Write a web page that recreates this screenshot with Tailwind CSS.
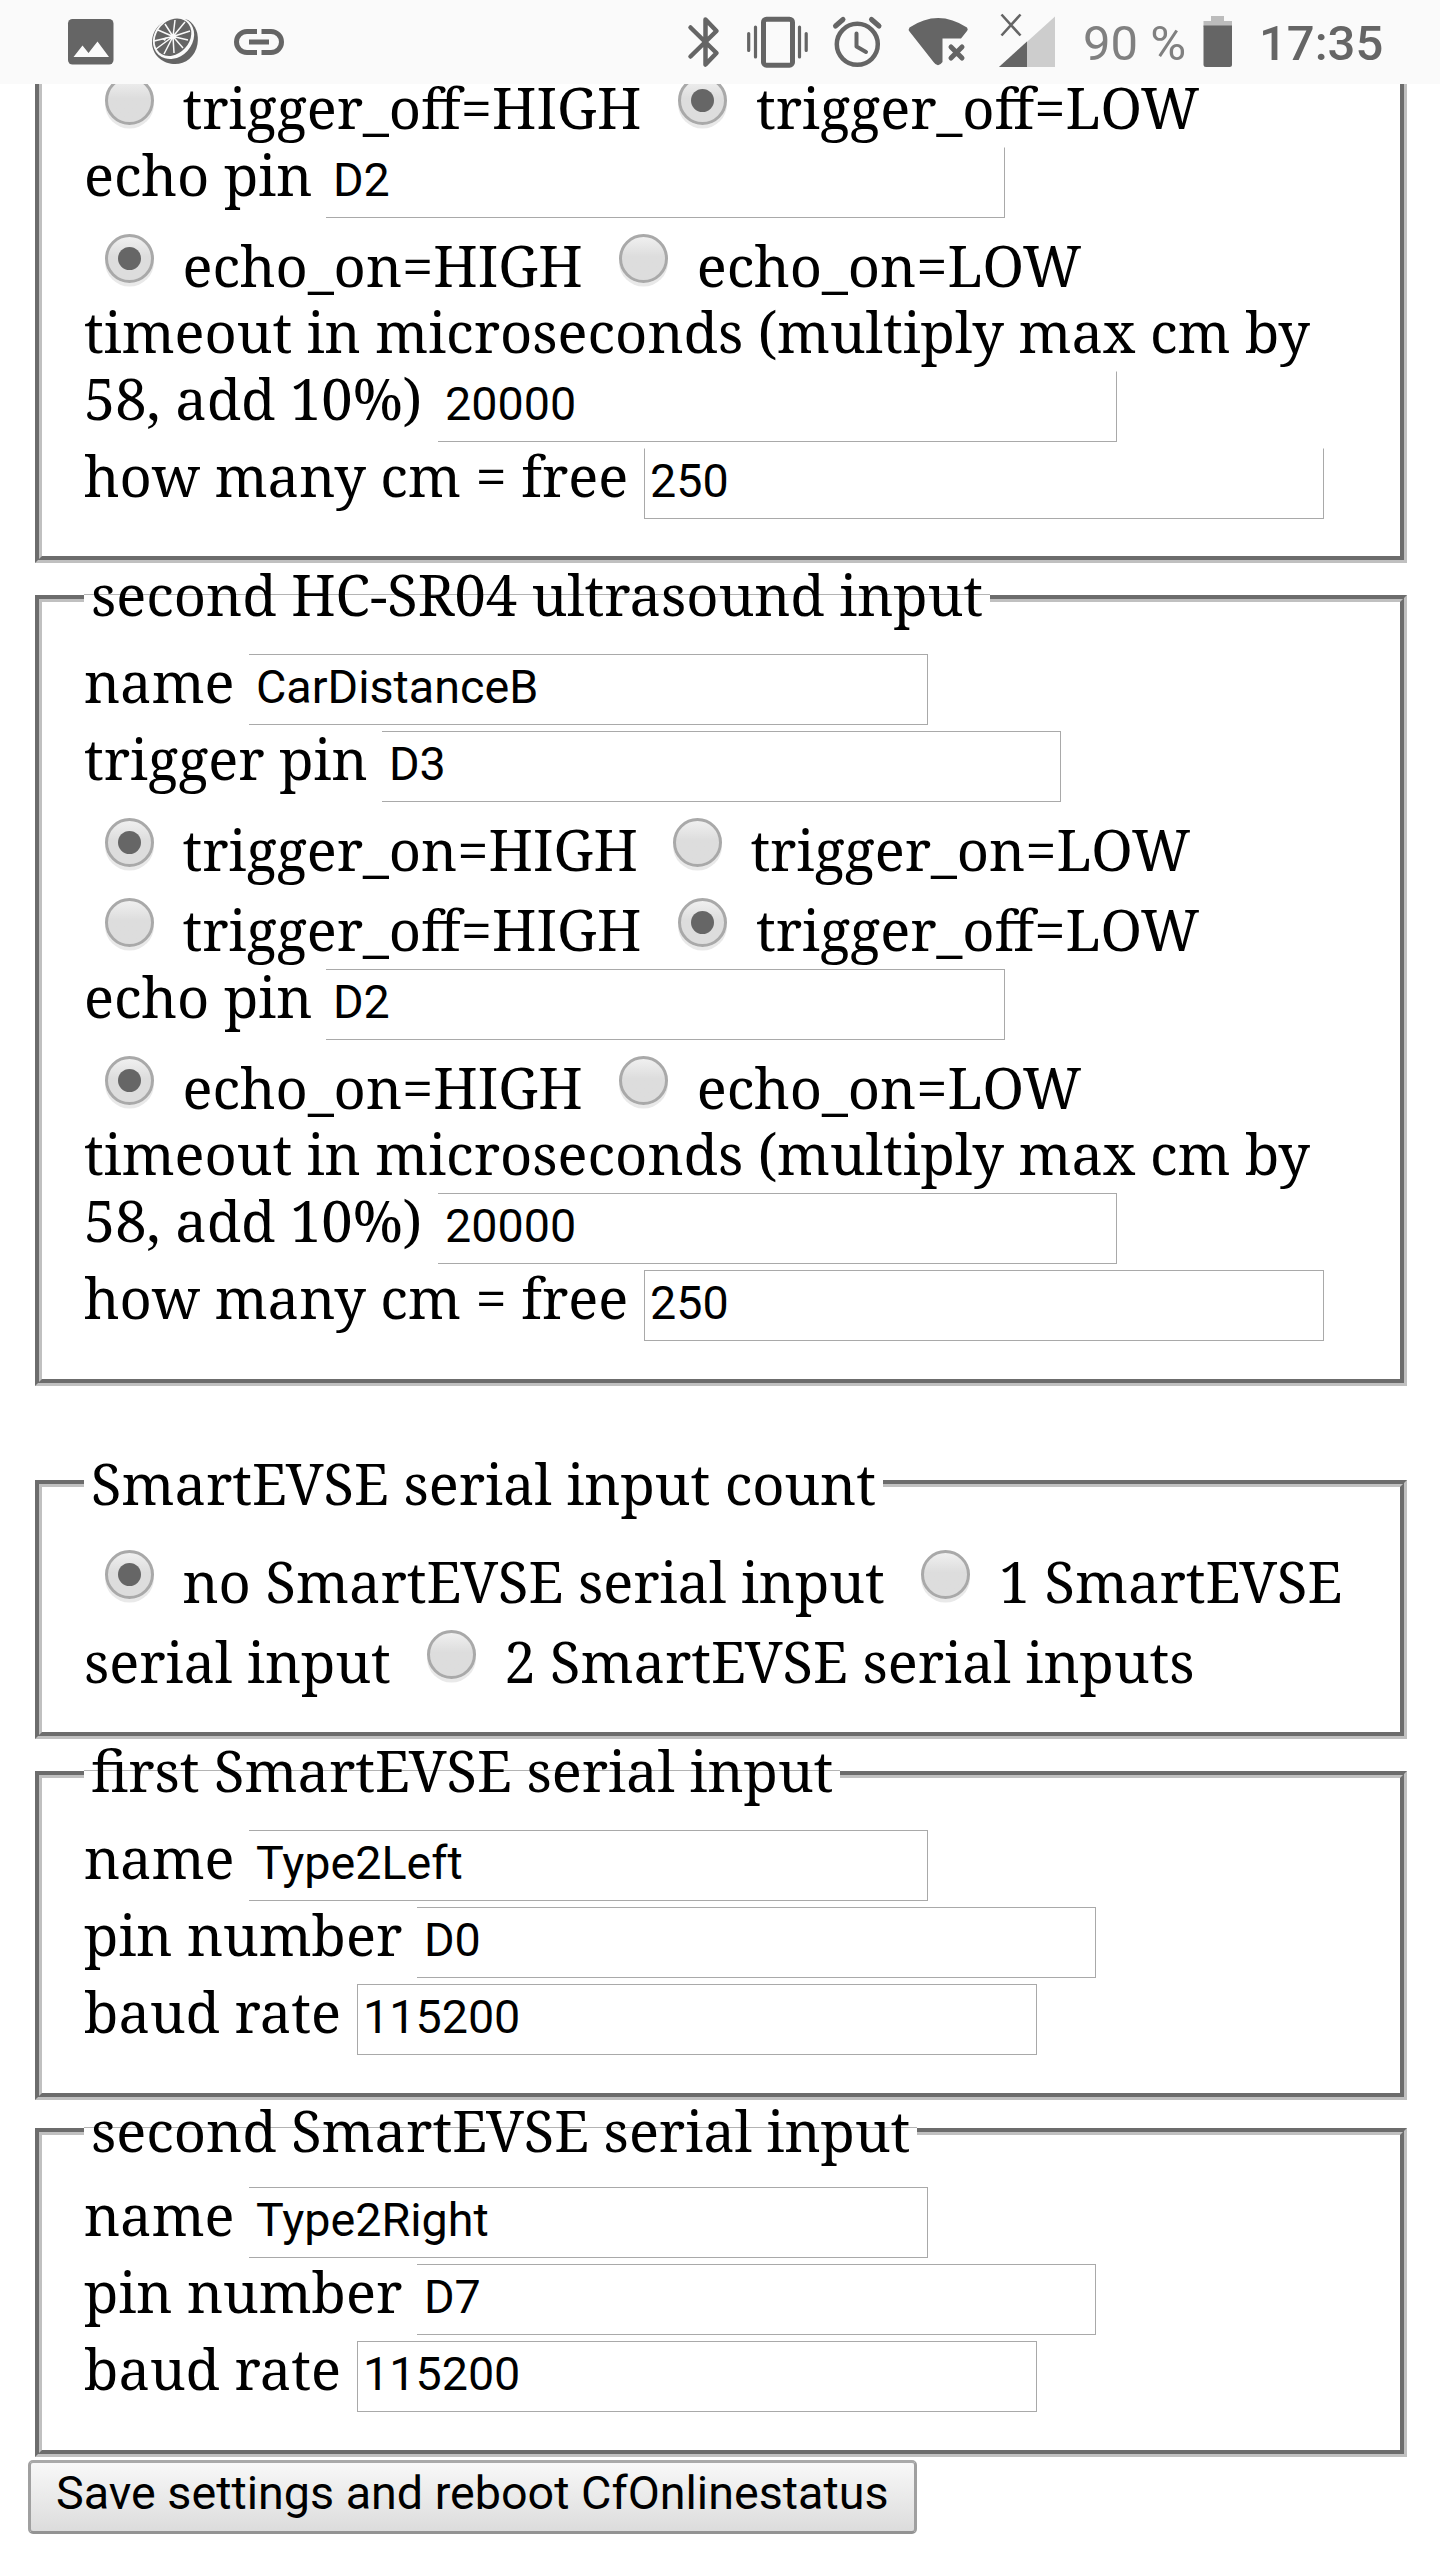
<!DOCTYPE html>
<html lang="en">
<head>
<meta charset="utf-8">
<title>CfOnlinestatus settings</title>
<script src="https://cdn.jsdelivr.net/npm/@tailwindcss/browser@4"></script>
</head>
<body class="h-[2560px] w-[1440px] overflow-hidden bg-white font-['Noto_Serif',serif] text-[56px] text-black">

<header class="flex h-[84px] bg-[#fafafa] font-['Roboto',sans-serif] text-[49px] leading-[87px] whitespace-pre">
  <svg class="ml-[60px] h-[84px] w-[60px] shrink-0" viewBox="60 0 60 84"><rect x="68" y="19" width="45.5" height="45.5" rx="4.500" fill="#656565"/><path d="M73.500 57l9-11.500 6 7.500 9-11.500 11.500 15.500z" fill="#fafafa"/></svg>
  <svg class="ml-[25px] h-[84px] w-[60px] shrink-0" viewBox="145 0 60 84">
    <path d="M188 20C196 25 199 34 197.500 44 195 58 184 65 173 64 162 63 152 55 152 42 152 26 168 14 188 20z" fill="#656565"/>
    <ellipse cx="173.500" cy="38" rx="19" ry="22.500" transform="rotate(42 173.500 38)" fill="#fafafa"/>
    <ellipse cx="173" cy="37.200" rx="16.300" ry="20.500" transform="rotate(42 173 37.200)" fill="#656565"/>
    <path d="M173 36.500L175 20M173 36.500L185 22M173 36.500L190 31M173 36.500L188 40M173 36.500L183 48M173 36.500L174 53M173 36.500L164 54M173 36.500L156 49M173 36.500L154 41M173 36.500L158 30M173 36.500L165 24" stroke="#fafafa" stroke-width="1.500"/>
    <circle cx="173" cy="36.500" r="2.500" fill="#fafafa"/><path d="M162 39l5-2-2 4z" fill="#fafafa"/>
  </svg>
  <svg class="ml-[25px] h-[84px] w-[60px] shrink-0" viewBox="230 0 60 84" fill="none" stroke="#656565" stroke-width="5"><path d="M257 31.500H247a10.500 10.500 0 0 0 0 21H257M261.500 31.500H271a10.500 10.500 0 0 1 0 21H261.500M249 42h20"/></svg>

  <svg class="ml-[390px] h-[84px] w-[50px] shrink-0" viewBox="680 0 50 84" fill="none" stroke="#656565" stroke-width="4.500" stroke-linejoin="round" stroke-linecap="round"><path d="M690.500 27.500L716.500 53 705.500 64.500V19.500L716.500 31 690.500 56.500"/></svg>
  <svg class="ml-[10px] h-[84px] w-[80px] shrink-0" viewBox="740 0 80 84" fill="none" stroke="#656565"><rect x="763.500" y="19.200" width="29" height="46" rx="3" stroke-width="5"/><path d="M748.700 33.500v17M755.500 27v30M799.500 27v30M806.200 33.500v17" stroke-width="3.200" stroke-linecap="round"/></svg>
  <svg class="ml-[10px] h-[84px] w-[60px] shrink-0" viewBox="830 0 60 84" fill="none" stroke="#656565" stroke-linecap="round"><circle cx="857.300" cy="44.300" r="20.500" stroke-width="4.500"/><path d="M856.500 33.500v13l9.500 5.500" stroke-width="4" stroke-linejoin="round"/><path d="M835.500 26l7.500-6.500M871.500 19.500l7.500 6.500" stroke-width="5"/></svg>
  <svg class="ml-[10px] h-[84px] w-[80px] shrink-0" viewBox="900 0 80 84"><path d="M909.500 27.500Q938 8.500 967 27.500 968.500 29.500 967 31L961 38.500H942.500V62Q938 68.500 933.500 62L909.500 31.500Q908 29.500 909.500 27.500z" fill="#656565"/><path d="M951 47l11 11M962 47l-11 11" stroke="#656565" stroke-width="5" stroke-linecap="round"/></svg>
  <svg class="ml-[10px] h-[84px] w-[74px] shrink-0" viewBox="990 0 74 84"><path d="M999 67L1055 16.500V67z" fill="#cdcdcd"/><path d="M999 67L1027 41.500V67z" fill="#656565"/><path d="M1001.500 14.500L1020.500 35.500M1020.500 14.500L1001.500 35.500" stroke="#656565" stroke-width="2.600"/></svg>
  <span class="ml-[19px] w-[119px] shrink-0 text-[#808080]">90 %</span>
  <svg class="h-[84px] w-[34px] shrink-0" viewBox="1202 0 34 84"><path d="M1211 16h13v5h8v6h-28.500v-6h7.500z" fill="#bcbcbc"/><path d="M1203.500 25.500H1232V64.500q0 2.500-2.500 2.500h-23.500q-2.500 0-2.500-2.500z" fill="#656565"/></svg>
  <span class="ml-[23px] shrink-0 font-medium text-[#656565]">17:35</span>
</header>

<main id="form"></main>

<script>
const input = (value, leftBorder, topBorder = true) =>
  `<div class="h-[71px] shrink-0 border-r border-b border-[#a9a9a9] font-['Roboto',sans-serif] text-[46.67px] leading-[64px] ${leftBorder ? 'w-[680px] border-l pl-[5px]' : 'w-[679px] pl-[7px]'} ${topBorder ? 'border-t' : 'border-t border-t-transparent'}">${value}</div>`;
const field = (label, width, value, leftBorder, topBorder) =>
  `<div class="flex h-[77px] leading-[54px] whitespace-nowrap"><label class="shrink-0" style="width:${width}px">${label}</label>${input(value, leftBorder, topBorder)}</div>`;
const radio = on =>
  `<span class="mt-[10px] flex size-[49px] shrink-0 items-center justify-center rounded-full border-[3.5px] border-[#a9a9a9] bg-linear-to-b from-[#f0f0f0] to-[#dddddd] to-45% shadow-[0_3.5px_0_#e9e9e9]">${on ? '<i class="size-[23px] rounded-full bg-[#666666]"></i>' : ''}</span>`;
const radioText = (t, gap = 'mr-[36.5px]') => `<span class="ml-[28.5px] ${gap}">${t}</span>`;
const row = (html, cls = 'h-[80px]') => `<div class="flex ${cls} leading-[82px] whitespace-nowrap">${html}</div>`;
const choices = (a, aOn, b, bOn, cls, gap) => row(`<span class="w-[21px] shrink-0"></span>${radio(aOn)}${radioText(a, gap)}${radio(bOn)}${radioText(b)}`, cls);
const trigOff = choices('trigger_off=HIGH', 0, 'trigger_off=LOW', 1, 'h-[81px] shrink-0', 'mr-[37px]');
const sensorTail = top =>
  field('echo pin', 242, 'D2', false, top) +
  choices('echo_on=HIGH', 1, 'echo_on=LOW', 0) +
  `<p class="h-[67px] leading-[55px] whitespace-nowrap">timeout in microseconds (multiply max cm by</p>` +
  field('58, add 10%)', 354, '20000', false, top) +
  field('how many cm = free', 560, '250', true, top);
const group = (legend, legendCls, cls, body) =>
  `<fieldset class="mr-[33px] ml-[35px] border-[7px] border-[#c0c0c0] [border-style:groove] pl-[42px] ${cls}"><legend class="h-[67px] px-[7px] whitespace-nowrap ${legendCls}">${legend}</legend>${body}</fieldset>`;
const line = 'bg-[linear-gradient(#b4b4b4,#b4b4b4)] bg-[length:100%_1px] bg-[position:0_29px] bg-no-repeat ';
const serial = (name, pin) =>
  `<div class="mt-[22px]">${field('name', 165, name, false)}${field('pin number', 333, pin, false)}${field('baud rate', 273, '115200', true)}</div>`;

document.getElementById('form').innerHTML =
  `<fieldset class="mr-[33px] ml-[35px] h-[479px] overflow-hidden border-[7px] border-t-0 border-[#c0c0c0] [border-style:groove] pl-[42px]"><div class="-mt-[18px]">${trigOff}${sensorTail(false)}</div></fieldset>` +
  group('second HC-SR04 ultrasound input', line + 'leading-[58px]', 'mt-[2px] h-[821px]',
    `<div class="mt-[22px]">${field('name', 165, 'CarDistanceB', false)}${field('trigger pin', 298, 'D3', false)}${choices('trigger_on=HIGH', 1, 'trigger_on=LOW', 0, 'h-[80px]', 'mr-[35px]')}${trigOff}${sensorTail(true)}</div>`) +
  group('SmartEVSE serial input count', 'leading-[66px]', 'mt-[64px] h-[289px]',
    `<div class="mt-[23px]">${row(`<span class="w-[21px] shrink-0"></span>${radio(1)}${radioText('no SmartEVSE serial input')}${radio(0)}${radioText('1 SmartEVSE')}`)}${row(`<span class="mr-[36px]">serial input</span>${radio(0)}${radioText('2 SmartEVSE serial inputs')}`)}</div>`) +
  group('first SmartEVSE serial input', line + 'leading-[58px]', 'mt-[2px] h-[359px]', serial('Type2Left', 'D0')) +
  group('second SmartEVSE serial input', line + 'leading-[64px]', '-mt-[2px] h-[359px]', serial('Type2Right', 'D7')) +
  `<button class="mt-[3px] ml-[28px] block h-[74px] w-[889px] rounded-[5px] border-[3px] border-[#a0a0a0] border-t-[#a9a9a9] border-b-[#939393] bg-linear-to-b from-[#f8f8f8] to-[#dcdcdc] pl-[25px] text-left font-['Roboto',sans-serif] text-[46.67px] leading-[60px] whitespace-nowrap"><span class="block h-[68px]">Save settings and reboot CfOnlinestatus</span></button>`;
</script>
</body>
</html>
